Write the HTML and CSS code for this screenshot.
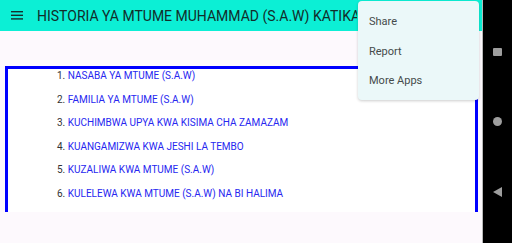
FILE: index.html
```html
<!DOCTYPE html>
<html lang="en">
<head>
  <meta charset="UTF-8">
  <meta name="viewport" content="width=device-width, initial-scale=1.0">
  <title>Historia ya Mtume</title>
  <link rel="stylesheet" href="styles.css">
</head>
<body>
  <div class="screen">
    <div class="app">
      <header class="toolbar">
        <svg class="menu-icon" width="12" height="9" viewBox="0 0 12 9">
          <rect x="0" y="0" width="12" height="1.4" fill="#14302d"/>
          <rect x="0" y="3.6" width="12" height="1.4" fill="#14302d"/>
          <rect x="0" y="7.2" width="12" height="1.4" fill="#14302d"/>
        </svg>
        <h1 class="title">HISTORIA YA MTUME MUHAMMAD (S.A.W) KATIKA MAISHA YAKE</h1>
      </header>

      <div class="content">
        <div class="chapters">
          <ul class="chapter-list">
            <li><span class="num">1.</span> <a href="#">NASABA YA MTUME (S.A.W)</a></li>
            <li><span class="num">2.</span> <a href="#">FAMILIA YA MTUME (S.A.W)</a></li>
            <li><span class="num">3.</span> <a href="#">KUCHIMBWA UPYA KWA KISIMA CHA ZAMAZAM</a></li>
            <li><span class="num">4.</span> <a href="#">KUANGAMIZWA KWA JESHI LA TEMBO</a></li>
            <li><span class="num">5.</span> <a href="#">KUZALIWA KWA MTUME (S.A.W)</a></li>
            <li><span class="num">6.</span> <a href="#">KULELEWA KWA MTUME (S.A.W) NA BI HALIMA</a></li>
          </ul>
        </div>
      </div>

      <!-- overflow menu, open -->
      <div class="popup">
        <div class="popup-item">Share</div>
        <div class="popup-item">Report</div>
        <div class="popup-item">More Apps</div>
      </div>
    </div>

    <nav class="navbar">
      <span class="nav-square"></span>
      <span class="nav-circle"></span>
      <span class="nav-back"></span>
    </nav>
  </div>
</body>
</html>
```

FILE: styles.css
```css
html, body {
  margin: 0;
  padding: 0;
}

body {
  font-family: Roboto, "Noto Sans", Arial, sans-serif;
  background-color: #000;
}

.screen {
  display: flex;
  width: 512px;
  height: 243px;
  overflow: hidden;
}

.app {
  position: relative;
  width: 482px;
  height: 243px;
  background-color: #fdf9fd;
  border-right: 1px solid #b9b9b9;
  overflow: hidden;
}

.toolbar {
  display: flex;
  align-items: center;
  height: 31px;
  background-color: #0cefd5;
}

.menu-icon {
  margin-left: 11px;
  margin-right: 14px;
  flex-shrink: 0;
}

/* the title runs under the open menu, so clip it at the menu's edge */
.title {
  margin: 0;
  max-width: 320px;
  font-size: 14px;
  font-weight: 400;
  color: #122d2a;
  white-space: nowrap;
  overflow: hidden;
}

.content {
  padding: 35px 4px 0 5px;
}

.chapters {
  height: 143px;
  background-color: #fff;
  border: 3px solid #0000ff;
  border-bottom: none;
}

.chapter-list {
  list-style: none;
  margin: 0;
  padding: 0 0 0 49px;
  font-family: Roboto, Arial, sans-serif;
  font-size: 10px;
  line-height: 13px;
}

.chapter-list li {
  margin-bottom: 10.6px;
  white-space: nowrap;
}

.chapter-list .num {
  color: #333;
}

.chapter-list a {
  color: #2727f0;
  text-decoration: none;
}

.popup {
  position: absolute;
  top: 1px;
  left: 358px;
  width: 121px;
  padding: 6px 0 4px;
  background-color: #ebf8f9;
  border-radius: 4px;
  box-shadow: 0 1px 3px rgba(0, 0, 0, 0.2);
}

.popup-item {
  height: 29.5px;
  line-height: 29.5px;
  padding-left: 11px;
  font-size: 11px;
  color: #454b4b;
}

.navbar {
  display: flex;
  flex-direction: column;
  align-items: center;
  width: 29px;
  background-color: #000;
}

.nav-square {
  width: 9px;
  height: 8px;
  margin-top: 48px;
  background-color: #9e9e9e;
  border-radius: 1px;
}

.nav-circle {
  width: 9px;
  height: 9px;
  margin-top: 61px;
  background-color: #9e9e9e;
  border-radius: 50%;
}

.nav-back {
  width: 0;
  height: 0;
  margin-top: 61px;
  border-top: 5px solid transparent;
  border-bottom: 5px solid transparent;
  border-right: 9px solid #9e9e9e;
}
```
